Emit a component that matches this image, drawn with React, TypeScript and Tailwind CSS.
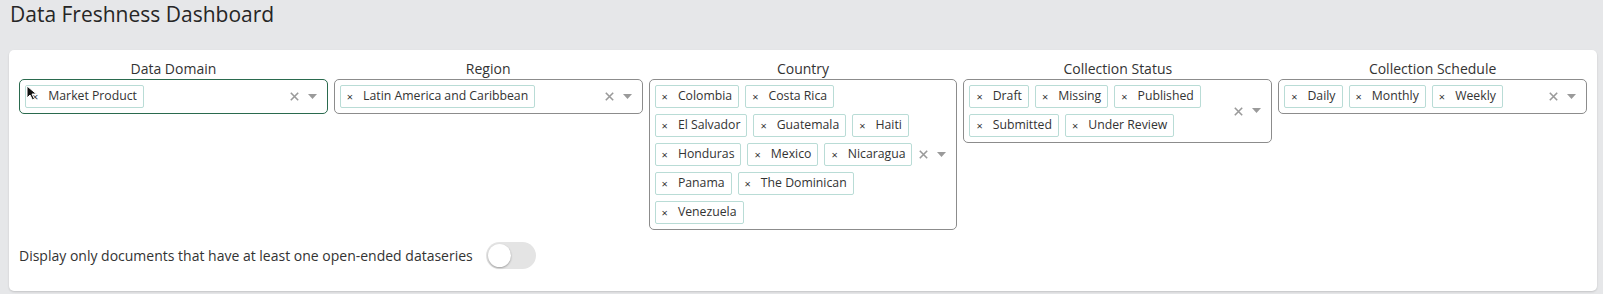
import React from "react";

const filters = [
    { label: "Data Domain", values: ["Market Product"], focused: true },
    { label: "Region", values: ["Latin America and Caribbean"] },
    {
        label: "Country",
        values: ["Colombia", "Costa Rica", "El Salvador", "Guatemala", "Haiti", "Honduras", "Mexico", "Nicaragua", "Panama", "The Dominican", "Venezuela"],
    },
    { label: "Collection Status", values: ["Draft", "Missing", "Published", "Submitted", "Under Review"] },
    { label: "Collection Schedule", values: ["Daily", "Monthly", "Weekly"] },
];

const Chip = ({ text }: { text: string }) => (
    <div className="h-[23px] flex items-center border border-[#b9dcd6] rounded-[2px] bg-white pl-[6px] pr-[6px] text-[12.25px] text-[#333]">
        <span className="text-[11px] leading-none text-[#333] mr-[10px]">×</span>
        <span className="leading-none whitespace-nowrap">{text}</span>
    </div>
);

const Cursor = () => (
    <svg className="absolute left-[6px] top-[5px]" width="12" height="16" viewBox="0 0 12 16">
        <path d="M1 1 L1 13 L4 10 L6.5 15 L8.5 14 L6 9 L10.5 9 Z" fill="#111" stroke="#fff" strokeWidth="1" />
    </svg>
);

const MultiSelect = ({ values, focused }: { values: string[]; focused?: boolean }) => (
    <div className={`relative flex items-center bg-white rounded-[5px] border ${focused ? "border-[#2a6a4e]" : "border-[#8c8c8c]"}`}>
        <div className="flex-1 min-w-0 flex flex-wrap gap-[6px] py-[5px] pl-[5px]">
            {values.map((v) => (
                <Chip key={v} text={v} />
            ))}
        </div>
        <div className="flex items-center gap-[9px] pr-[10px]">
            <svg width="9" height="9" viewBox="0 0 9 9">
                <path d="M0.8 0.8 L8.2 8.2 M8.2 0.8 L0.8 8.2" stroke="#9a9a9a" strokeWidth="1.6" />
            </svg>
            <svg width="9" height="6" viewBox="0 0 9 6">
                <path d="M0 0 L9 0 L4.5 5 Z" fill="#9a9a9a" />
            </svg>
        </div>
        {focused && <Cursor />}
    </div>
);

export default function App() {
    return (
        <div className="min-h-[294px] bg-[#e6e7e9] pl-[9px] pr-[6px] pb-[3px] font-['Open_Sans',sans-serif] text-[#262626]">
            <h1 className="text-[21px] leading-[28px] pl-[1px]">Data Freshness Dashboard</h1>
            <div className="mt-[22px] bg-white rounded-[5px] shadow-[0_1px_2px_rgba(0,0,0,0.15)] px-[10px] pt-[9px] pb-[22px]">
                <div className="grid grid-cols-5 gap-[6px] items-start">
                    {filters.map((f) => (
                        <div key={f.label}>
                            <div className="text-center text-[14px] leading-[20px] text-[#333]">{f.label}</div>
                            <MultiSelect values={f.values} focused={f.focused} />
                        </div>
                    ))}
                </div>
                <div className="mt-[12px] flex items-center gap-[13px]">
                    <span className="text-[14px] leading-[20px] text-[#333]">
                        Display only documents that have at least one open-ended dataseries
                    </span>
                    <div className="w-[50px] h-[27px] rounded-full bg-[#e4e4e4] flex items-center px-[2px]">
                        <div className="w-[23px] h-[23px] rounded-full bg-white shadow-[0_1px_2px_rgba(0,0,0,0.3)]" />
                    </div>
                </div>
            </div>
        </div>
    );
}
